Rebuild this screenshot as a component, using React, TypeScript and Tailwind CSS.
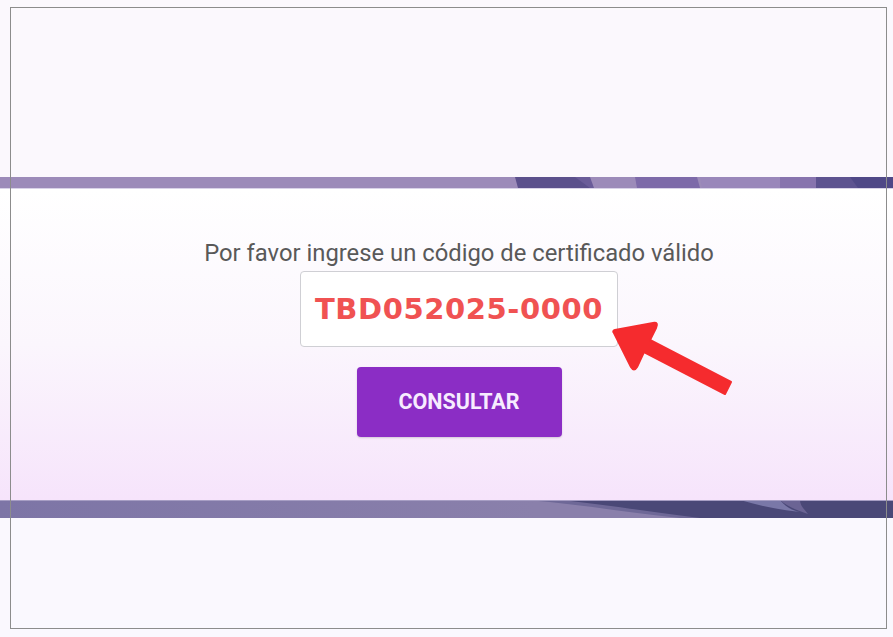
import React from 'react';

function TopBand() {
  return (
    <svg className="block w-full h-full" viewBox="0 0 893 12" preserveAspectRatio="none">
      <rect x="0" y="0" width="893" height="11" fill="#9c8bb9" />
      <polygon points="515,0 577,0 592,11 518,11" fill="#5b508c" />
      <polygon points="575,0 590,0 594,11 590,11" fill="#6a5c99" />
      <polygon points="635,0 697,0 700,11 637,11" fill="#7d6aa9" />
      <polygon points="700,0 780,0 780,11 702,11" fill="#9987ba" />
      <polygon points="780,0 816,0 816,11 780,11" fill="#8774ae" />
      <polygon points="816,0 893,0 893,11 816,11" fill="#5d5390" />
      <polygon points="850,0 893,0 893,11 858,11" fill="#4f4887" />
      <rect x="0" y="11" width="893" height="1" fill="#d9d3e8" />
    </svg>
  );
}

function BottomBand() {
  return (
    <svg className="block w-full h-full" viewBox="0 0 893 18" preserveAspectRatio="none">
      <defs>
        <linearGradient id="bb" x1="0" y1="0" x2="1" y2="0">
          <stop offset="0" stopColor="#7d75a6" />
          <stop offset="0.6" stopColor="#8a80ab" />
          <stop offset="1" stopColor="#8a80ab" />
        </linearGradient>
      </defs>
      <rect x="0" y="0" width="893" height="18" fill="url(#bb)" />
      <path d="M527,0 C580,4 620,12 680,18 L893,18 L893,0 Z" fill="#6e6897" />
      <path d="M560,0 C610,5 650,12 700,18 L893,18 L893,0 Z" fill="#4a4877" />
      <path d="M740,0 L780,0 C785,6 790,10 800,12 C780,10 760,6 740,0 Z" fill="#7a78a8" />
      <path d="M780,0 L800,0 C800,6 805,10 808,14 C795,10 785,5 780,0 Z" fill="#6b6494" />
      <rect x="0" y="0" width="893" height="1" fill="#a79ec4" />
    </svg>
  );
}

export default function App() {
  return (
    <div className="relative w-[893px] h-[637px] overflow-hidden bg-[#fbf8fd] flex flex-col">
      <div className="h-[177px] shrink-0" />
      <div className="h-[12px] shrink-0">
        <TopBand />
      </div>

      <div className="relative h-[311px] shrink-0 bg-gradient-to-b from-[#ffffff] via-[#fbf6fd] to-[#f6e4fb] flex flex-col items-center pt-[50px] pl-[25px]">
        <p className="text-[23.8px] leading-[28px] text-[#595959] font-['Roboto',sans-serif]">
          Por favor ingrese un código de certificado válido
        </p>
        <div className="mt-[4px] w-[318px] h-[76px] bg-white border border-[#cfcfd4] rounded-[4px] flex items-center justify-center">
          <span className="mt-[2px] text-[29px] font-bold tracking-[0.6px] text-[#f05252] font-['DejaVu_Sans',sans-serif]">
            TBD052025-0000
          </span>
        </div>
        <button className="mt-[20px] w-[205px] h-[70px] rounded-[4px] bg-[#8b2dc5] text-[#f7ecff] text-[21.5px] font-bold font-['Roboto',sans-serif] shadow-[0_1px_2px_rgba(0,0,0,0.15)]">
          CONSULTAR
        </button>

        <svg className="absolute left-[600px] top-[127px] w-[140px] h-[80px]" viewBox="0 0 140 80">
          <path
            d="M14,17 Q12,15 15,14 L53,7 Q59,6 56,12 L50,24 L131,66 L125,78 L44,36 L37,51 Q34,56 31,51 Z"
            fill="#f52b2e"
            stroke="#f52b2e"
            strokeWidth="2"
            strokeLinejoin="round"
          />
        </svg>
      </div>

      <div className="h-[18px] shrink-0">
        <BottomBand />
      </div>
      <div className="flex-1 bg-[#faf8fe]" />

      <div className="pointer-events-none absolute left-[10px] top-[7px] w-[877px] h-[622px] border border-[#8c8c8c]" />
    </div>
  );
}
